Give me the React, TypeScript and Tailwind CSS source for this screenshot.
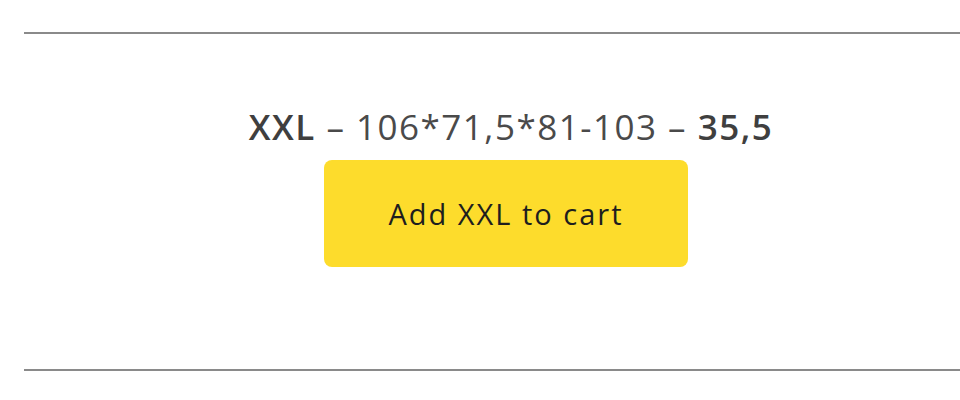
export default function App() {
  return (
    <div className="w-[960px] h-[400px] overflow-hidden bg-white" style={{ fontFamily: '"Open Sans", sans-serif' }}>
      <div className="ml-6 w-[964px] pt-8">
        <div className="h-[2px] bg-[#8a8a8a]" />
        <div className="flex flex-col items-center h-[335px] pt-[72px]">
          <div className="ml-[10px] text-[35px] leading-[42px] tracking-[1.5px] text-[#4a4a4a] whitespace-nowrap">
            <span className="font-semibold text-[#3f3f3f]">XXL</span> – 106*71,5*81-103 – <span className="font-semibold text-[#3f3f3f]">35,5</span>
          </div>
          <button className="mt-[12px] w-[364px] h-[107px] rounded-[8px] bg-[#fddc2c] text-[29px] tracking-[2px] text-[#1e1e1e] flex items-center justify-center">
            Add XXL to cart
          </button>
        </div>
        <div className="h-[2px] bg-[#8a8a8a]" />
      </div>
    </div>
  );
}
